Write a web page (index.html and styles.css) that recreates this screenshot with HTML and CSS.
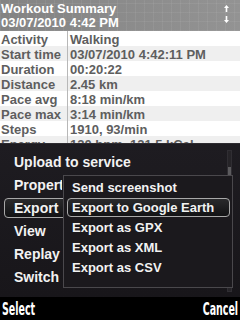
FILE: index.html
```
<!DOCTYPE html>
<html>
<head>
<meta charset="utf-8">
<link rel="stylesheet" href="styles.css">
</head>
<body>
<div class="screen">
  <div class="header">
    <div class="htext">
      <div class="title">Workout Summary</div>
      <div class="date">03/07/2010 4:42 PM</div>
    </div>
    <div class="arrows">
      <svg width="7" height="22" viewBox="0 0 7 22">
        <path d="M3.5 2 L6 5 L4.3 5 L4.3 9 L2.7 9 L2.7 5 L1 5 Z" fill="#fff"/>
        <path d="M3.5 20 L6 17 L4.3 17 L4.3 13 L2.7 13 L2.7 17 L1 17 Z" fill="#fff"/>
      </svg>
    </div>
  </div>
  <div class="content">
    <div class="row"><div class="lbl">Activity</div><div class="val">Walking</div></div>
    <div class="row alt"><div class="lbl">Start time</div><div class="val">03/07/2010 4:42:11 PM</div></div>
    <div class="row"><div class="lbl">Duration</div><div class="val">00:20:22</div></div>
    <div class="row alt"><div class="lbl">Distance</div><div class="val">2.45 km</div></div>
    <div class="row"><div class="lbl">Pace avg</div><div class="val">8:18 min/km</div></div>
    <div class="row alt"><div class="lbl">Pace max</div><div class="val">3:14 min/km</div></div>
    <div class="row"><div class="lbl">Steps</div><div class="val">1910, 93/min</div></div>
    <div class="row alt"><div class="lbl">Energy</div><div class="val">120 bpm, 121.5 kCal</div></div>
    <div class="row"><div class="lbl">&nbsp;</div><div class="val">&nbsp;</div></div>

    <div class="menu">
      <div class="mitem">Upload to service</div>
      <div class="mitem clip">Properties</div>
      <div class="mitem sel"><span class="hl">Export</span></div>
      <div class="mitem">View</div>
      <div class="mitem">Replay</div>
      <div class="mitem">Switch</div>
      <div class="scroll"><div class="thumb"></div></div>
    </div>
    <div class="submenu">
      <div class="sitem">Send screenshot</div>
      <div class="sitem sel"><span class="hl">Export to Google Earth</span></div>
      <div class="sitem">Export as GPX</div>
      <div class="sitem">Export as XML</div>
      <div class="sitem">Export as CSV</div>
    </div>
  </div>
  <div class="softkeys">
    <span class="sk left">Select</span>
    <span class="sk right">Cancel</span>
  </div>
</div>
</body>
</html>
```
FILE: styles.css
```
html, body {
  margin: 0;
  padding: 0;
  background: #000;
}
.screen {
  width: 240px;
  height: 320px;
  display: flex;
  flex-direction: column;
  overflow: hidden;
  font-family: "Liberation Sans", Arial, sans-serif;
  font-weight: bold;
}
.header {
  height: 31px;
  box-sizing: border-box;
  padding: 2px 0 0 1px;
  display: flex;
  justify-content: space-between;
  background-color: #8b8b8b;
  background-image:
    repeating-linear-gradient(90deg, rgba(255,255,255,0.06) 0 1px, transparent 1px 9px),
    repeating-linear-gradient(0deg, rgba(255,255,255,0.06) 0 1px, transparent 1px 9px),
    linear-gradient(90deg, #838383, #939393);
  color: #fff;
}
.htext {
  font-size: 13px;
  line-height: 14px;
}
.arrows {
  padding: 1px 10px 0 0;
}
.content {
  flex: 1;
  position: relative;
  background: #fff;
  overflow: hidden;
}
.row {
  display: flex;
  height: 15px;
  box-sizing: border-box;
  padding-top: 2px;
  font-size: 13px;
  line-height: 13px;
  color: #5e5e5e;
  background: #fff;
}
.row.alt {
  background: #efefef;
}
.lbl {
  width: 66px;
  padding-left: 1px;
  border-right: 1px solid #b8b8b8;
  margin-top: -2px;
  padding-top: 2px;
  white-space: nowrap;
}
.val {
  padding-left: 2px;
  white-space: nowrap;
}
.menu {
  position: absolute;
  left: 0;
  right: 0;
  top: 112px;
  height: 154px;
  box-sizing: border-box;
  padding-top: 7px;
  background: linear-gradient(180deg, #1e1c21, #18161a);
  border-top: 1px solid #2e2c31;
  color: #f2f2f2;
  font-size: 14px;
}
.mitem {
  height: 23px;
  line-height: 23px;
  padding-left: 14px;
  white-space: nowrap;
}
.mitem.clip {
  width: 48px;
  overflow: hidden;
}
.mitem.sel {
  padding-left: 4px;
}
.mitem .hl {
  display: inline-block;
  height: 18px;
  line-height: 18px;
  padding: 0 60px 0 9px;
  margin-top: 1px;
  vertical-align: top;
  border: 1px solid #a8a8a8;
  border-radius: 4px;
  background: linear-gradient(180deg, #2a2a2c, #121214);
}
.scroll {
  position: absolute;
  left: 227px;
  top: 6px;
  width: 3px;
  height: 140px;
  background: #262428;
  border: 1px solid #302e33;
}
.thumb {
  margin-top: 16px;
  height: 9px;
  background: #5c5b5e;
}
.submenu {
  position: absolute;
  left: 63px;
  top: 144px;
  width: 170px;
  height: 113px;
  box-sizing: border-box;
  padding-top: 2px;
  background: #1b191d;
  border: 1px solid #4a484c;
  color: #f2f2f2;
  font-size: 13px;
}
.sitem {
  height: 20px;
  line-height: 20px;
  padding-left: 8px;
  white-space: nowrap;
}
.sitem.sel {
  padding-left: 3px;
  padding-right: 2px;
}
.sitem .hl {
  display: block;
  height: 17px;
  line-height: 17px;
  padding-left: 4px;
  border: 1px solid #a8a8a8;
  border-radius: 4px;
  background: linear-gradient(180deg, #2a2a2c, #121214);
}
.softkeys {
  height: 23px;
  background: #000;
  color: #fff;
  display: flex;
  justify-content: space-between;
  align-items: center;
  padding: 1px 2px 0 2px;
  box-sizing: border-box;
  font-family: "DejaVu Sans Condensed", "Liberation Sans", sans-serif;
  font-size: 17px;
}
.sk {
  display: inline-block;
  transform: scaleX(0.62);
}
.sk.left {
  transform-origin: left center;
}
.sk.right {
  transform-origin: right center;
}
```
